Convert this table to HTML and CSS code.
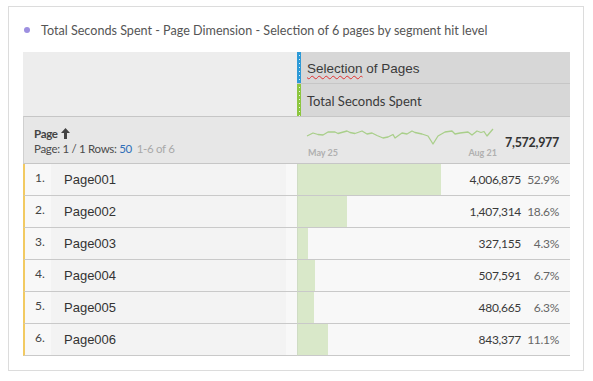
FILE: index.html
```html
<!DOCTYPE html>
<html>
<head>
<meta charset="utf-8">
<link rel="stylesheet" href="styles.css">
</head>
<body>
<div class="card">
  <div class="title"><span class="dot"></span><span>Total Seconds Spent - Page Dimension - Selection of 6 pages by segment hit level</span></div>
  <div class="table">
    <div class="head-left"></div>
    <div class="head-right">
      <div class="seg seg-blue"><span class="grip"></span><span class="seg-text arial"><span class="spell">Selection</span> of Pages</span></div>
      <div class="seg seg-green"><span class="grip"></span><span class="seg-text">Total Seconds Spent</span></div>
    </div>
    <div class="sum-left">
      <div class="dim">Page <svg class="arrow" width="9" height="11" viewBox="0 0 9 11"><path d="M4.5 0 L9 5 L6 5 L6 11 L3 11 L3 5 L0 5 Z" fill="#444"/></svg></div>
      <div class="pager">Page: 1 / 1 Rows: <span class="blue">50</span> <span class="muted">1-6 of 6</span></div>
    </div>
    <div class="sum-right">
      <div class="spark">
        <svg width="192" height="22" viewBox="0 0 192 22"><polyline fill="none" stroke="#a9cf8a" stroke-width="1.3" stroke-linejoin="round" points="2,11 8,8 13,9.5 18,10 23,7 30,7 33,8.5 42,6 45,7.5 50,8.5 57,6 62,9 67,8 72,10.5 78,13 83,12 88,9.5 90,13 97,8 102,9 107,6 110,7.5 117,9 123,11 128,19 133,11 140,7 147,6 150,9 155,8 163,7 167,10 172,6 176,7.5 179,6.5 182,11 188,4"/></svg>
        <div class="dates"><span>May 25</span><span>Aug 21</span></div>
      </div>
      <div class="total">7,572,977</div>
    </div>

    <div class="rl"><span class="num">1.</span><span class="name">Page001</span></div>
    <div class="rr"><span class="bar" style="width:143px"></span><span class="val">4,006,875</span><span class="pct">52.9%</span></div>
    <div class="rl"><span class="num">2.</span><span class="name">Page002</span></div>
    <div class="rr"><span class="bar" style="width:49px"></span><span class="val">1,407,314</span><span class="pct">18.6%</span></div>
    <div class="rl"><span class="num">3.</span><span class="name">Page003</span></div>
    <div class="rr"><span class="bar" style="width:10px"></span><span class="val">327,155</span><span class="pct">4.3%</span></div>
    <div class="rl"><span class="num">4.</span><span class="name">Page004</span></div>
    <div class="rr"><span class="bar" style="width:17px"></span><span class="val">507,591</span><span class="pct">6.7%</span></div>
    <div class="rl"><span class="num">5.</span><span class="name">Page005</span></div>
    <div class="rr"><span class="bar" style="width:16px"></span><span class="val">480,665</span><span class="pct">6.3%</span></div>
    <div class="rl"><span class="num">6.</span><span class="name">Page006</span></div>
    <div class="rr"><span class="bar" style="width:30px"></span><span class="val">843,377</span><span class="pct">11.1%</span></div>
  </div>
</div>
</body>
</html>
```
FILE: styles.css
```css
html, body { margin: 0; padding: 0; background: #fff; }
body { font-family: Lato, "Liberation Sans", sans-serif; color: #4b4b4b; }
.card {
  margin: 6px 0 0 8px;
  width: 574px;
  height: 363px;
  border: 1px solid #dcdcdc;
}
.title {
  display: flex;
  align-items: center;
  height: 20px;
  margin: 13px 0 0 13px;
  font-size: 12.6px;
  color: #555;
}
.dot { width: 6px; height: 6px; border-radius: 50%; background: #9d8fe0; margin: 0 11px 0 2px; flex: none; }
.table {
  margin: 12px 0 0 14px;
  width: 547px;
  display: grid;
  grid-template-columns: 274px 273px;
}
.head-left { background: #ededed; height: 64px; }
.head-right { background: #d7d7d7; display: flex; flex-direction: column; }
.seg { height: 32px; display: flex; align-items: stretch; box-sizing: border-box; }
.seg-blue { border-bottom: 1px solid #c6c6c6; }
.grip { display: block; flex: 0 0 4px; width: 4px; margin-right: 6px;
  background-image: repeating-linear-gradient(to bottom, transparent 0 3px, rgba(255,255,255,.85) 3px 4px);
  background-size: 1px 100%; background-repeat: no-repeat; background-position: 2px 0; }
.seg-blue .grip { background-color: #2d9ad7; }
.seg-green .grip { background-color: #8cc63f; }
.seg-text { font-size: 13px; color: #3a3a3a; align-self: center; margin-top: 2px; }
.arial { font-family: "Liberation Sans", Arial, sans-serif; font-size: 13.5px; }
.spell { text-decoration: underline wavy #e03030; text-decoration-thickness: 1px; text-underline-offset: 2px; }
.sum-left, .sum-right { background: #e7e7e7; height: 48px; box-sizing: border-box; border-top: 1px solid #c6c6c6; border-bottom: 1px solid #c6c6c6; }
.sum-left { padding: 9px 0 0 10px; font-size: 11.5px; letter-spacing: -0.3px; color: #4b4b4b; border-left: 1px solid #d0d0d0; }
.dim { font-weight: bold; line-height: 15px; color: #444; display: flex; align-items: center; gap: 3px; }
.arrow { display: block; }
.pager { line-height: 16px; }
.blue { color: #2f6fb8; }
.muted { color: #a9a9a9; margin-left: 2px; }
.sum-right { display: flex; align-items: center; padding-left: 8px; }
.spark { width: 192px; display: flex; flex-direction: column; margin-top: 2px; }
.spark svg { display: block; }
.dates { display: flex; justify-content: space-between; font-size: 9px; font-weight: bold; color: #b0b0b0; padding: 0 0 0 3px; }
.total { margin-left: auto; margin-right: 11px; font-weight: bold; font-size: 12.5px; letter-spacing: -0.3px; color: #333; margin-top: 4px; }
.rl, .rr { height: 32px; box-sizing: border-box; border-bottom: 1px solid #c9c9c9; background: #f8f8f8; display: flex; align-items: center; }
.rl { border-left: 2px solid #f2ca62; padding-left: 10px; }
.num { width: 16px; font-size: 12px; color: #444; margin-top: -4px; flex: none; }
.name { font-family: "Liberation Sans", Arial, sans-serif; font-size: 13px; color: #333; background: #f3f3f3; align-self: stretch; display: flex; align-items: center; width: 235px; padding-left: 13px; box-sizing: border-box; }
.rr { border-left: 1px solid #cfdcc4; }
.bar { align-self: stretch; background: #d9e8c9; }
.val { margin-left: auto; font-size: 12px; letter-spacing: -0.3px; color: #3a3a3a; }
.pct { width: 38px; text-align: right; margin-right: 11px; font-size: 12px; letter-spacing: -0.3px; color: #666; }
```
